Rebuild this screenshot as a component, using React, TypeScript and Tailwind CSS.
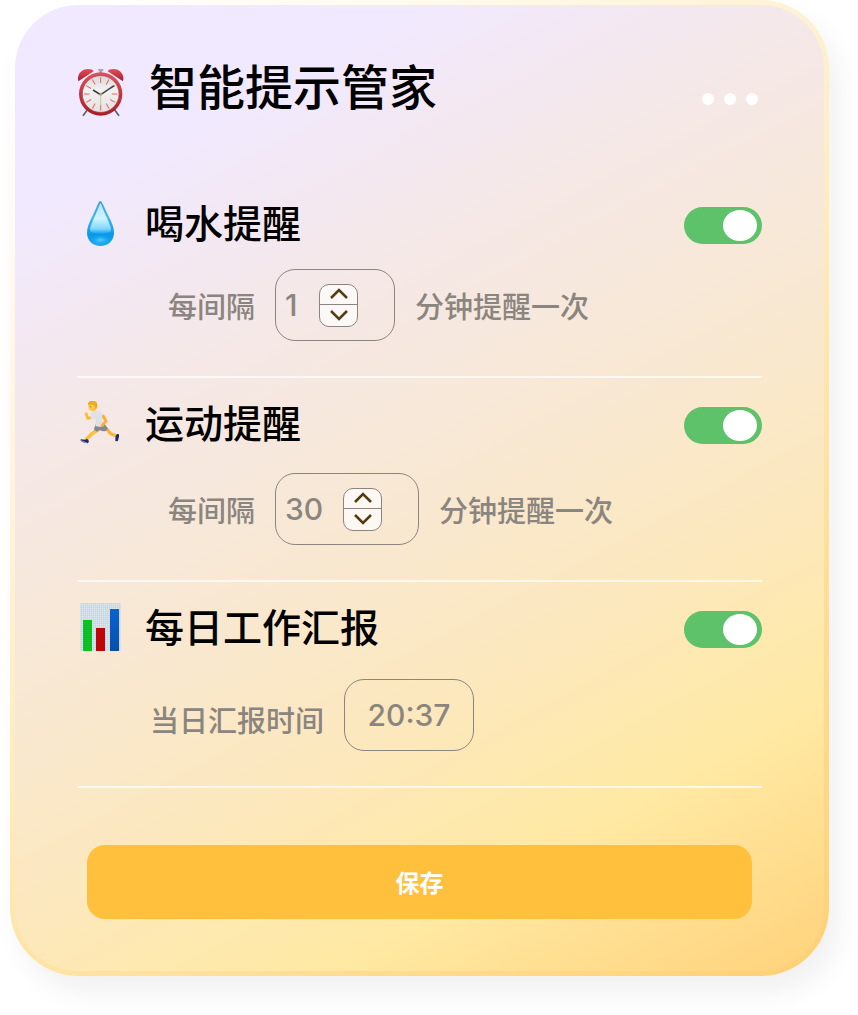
import React, { useState } from "react";

const ticks = [0, 30, 60, 90, 120, 150, 180, 210, 240, 270, 300, 330];

const ClockIcon = () => (
  <svg viewBox="27 24 144 150" className="h-[50px] w-12 shrink-0" aria-hidden="true">
    <defs>
      <linearGradient id="clock-red" x1="0" y1="0" x2="0" y2="1">
        <stop offset="0" stopColor="#e0505c" />
        <stop offset="1" stopColor="#a81c26" />
      </linearGradient>
      <linearGradient id="clock-face" x1="0" y1="0" x2="0" y2="1">
        <stop offset="0" stopColor="#d9d9d9" />
        <stop offset="0.4" stopColor="#f2f2f2" />
        <stop offset="1" stopColor="#e2e2e2" />
      </linearGradient>
    </defs>
    <path d="M58 150 46 166M140 150l12 16" stroke="#59636b" strokeWidth="5" strokeLinecap="round" />
    <path d="M98 30v14" stroke="#8a9097" strokeWidth="6" />
    <rect x="91" y="27" width="15" height="7" rx="2" fill="#a3a8ae" />
    <path d="M31 64c-5-18 7-37 29-37 9 0 15 2 17 7z" fill="url(#clock-red)" />
    <path d="M165 64c5-18-7-37-29-37-9 0-15 2-17 7z" fill="url(#clock-red)" />
    <circle cx="98" cy="102" r="65" fill="url(#clock-red)" />
    <circle cx="98" cy="102" r="55" fill="url(#clock-face)" stroke="#b3464c" strokeWidth="2" />
    {ticks.map((a) => (
      <path key={a} d="M98 52v17" stroke="#e8645f" strokeWidth="3" transform={`rotate(${a} 98 102)`} />
    ))}
    <path d="m98 104-23-14" stroke="#3d4444" strokeWidth="5" />
    <path d="m98 104 40-27" stroke="#3d4444" strokeWidth="4" />
    <path d="M98 98v44" stroke="#dfa763" strokeWidth="2" />
    <circle cx="98" cy="103" r="4" fill="#c79a5d" />
  </svg>
);

const DropIcon = () => (
  <svg viewBox="0 0 48 48" className="h-12 w-12 shrink-0" aria-hidden="true">
    <defs>
      <linearGradient id="drop-body" x1="0" y1="0" x2="0" y2="1">
        <stop offset="0" stopColor="#3d9ec4" />
        <stop offset="0.35" stopColor="#43b9ee" />
        <stop offset="0.75" stopColor="#0b98ea" />
        <stop offset="1" stopColor="#1fa9ee" />
      </linearGradient>
      <linearGradient id="drop-glow" x1="0" y1="0" x2="0" y2="1">
        <stop offset="0" stopColor="#a9e6fb" />
        <stop offset="0.5" stopColor="#d0f4ff" />
        <stop offset="0.85" stopColor="#7dd6fa" />
        <stop offset="1" stopColor="#3fb8f4" stopOpacity="0.3" />
      </linearGradient>
      <radialGradient id="drop-base">
        <stop offset="0" stopColor="#52d3f9" />
        <stop offset="1" stopColor="#19a4ee" stopOpacity="0" />
      </radialGradient>
    </defs>
    <path d="M23.300 0C21.500 0 19.500 7 15.500 15c-3 6-5.500 11-5.500 16.500C10 40 16 45 23.500 45S37 40 37 31.500C37 26 34.500 21 31.500 15 27.500 7 25 0 23.300 0z" fill="url(#drop-body)" />
    <path d="M23.500 2c-1 1-3 8-6.500 15-2 5-4 8-4 12 0 5 21 5 21 0 0-4-2-7-4-12-3.500-7-5.500-14-6.500-15z" fill="url(#drop-glow)" />
    <ellipse cx="23.500" cy="39" rx="10" ry="5" fill="url(#drop-base)" />
  </svg>
);

const RunnerIcon = () => (
  <svg viewBox="9 18 144 144" className="h-12 w-12 shrink-0" aria-hidden="true">
    <g fill="none" strokeLinecap="round" strokeLinejoin="round">
      <path d="m96 100 14 16 17 7" stroke="#f5b83c" strokeWidth="10" />
      <path d="M71 104 53 117l-15 15" stroke="#fbbf3f" strokeWidth="11" />
      <path d="m52 68-11 2-4-12" stroke="#fbb92f" strokeWidth="8" />
    </g>
    <path d="m129 117 6 1c1 6-1 13-4 21l-7-1c0-5 0-10 1-15z" fill="#1b2b66" />
    <path d="m20 133 14 1 5-3 6 7-3 7c-8-1-18-4-22-8z" fill="#1b2b66" />
    <path d="m21 137 20 8" stroke="#c9cbd3" strokeWidth="2" />
    <path d="M65 87h27l10 14c-3 5-8 8-14 8l-11-3-8 4c-5-2-8-5-9-8z" fill="#85888e" />
    <path d="M49 62c1-9 6-14 14-14h15c6 2 9 9 11 17l-5 5 2 22c-6 5-16 4-22 1l1-22-14 3z" fill="#dfe1e6" />
    <path d="m88 64 8 14-11 13" fill="none" stroke="#f7b136" strokeWidth="9" strokeLinecap="round" strokeLinejoin="round" />
    <circle cx="37" cy="57" r="5.500" fill="#ffc247" />
    <path d="M43 31c0-8 5-13 13-13s14 6 14 14-5 17-13 17c-8 0-13-5-13-10z" fill="#ffc64b" />
    <path d="M42 29c-1-7 5-12 13-12 10 0 15 5 15 14 0 5-2 9-5 11l-3-8-3-5z" fill="#e9ad20" />
    <circle cx="49" cy="35" r="1.500" fill="#6c4a18" />
  </svg>
);

const ChartIcon = () => (
  <svg viewBox="0 2 48 48" className="h-12 w-12 shrink-0 overflow-visible" aria-hidden="true">
    <defs>
      <pattern id="chart-grid" width="2" height="2" patternUnits="userSpaceOnUse">
        <rect width="2" height="2" fill="#dfe8ee" />
        <path d="M0 .5h2M.5 0v2" stroke="#c4d5e1" strokeWidth="0.700" />
      </pattern>
      <linearGradient id="chart-blue" x1="0" y1="0" x2="0" y2="1">
        <stop offset="0" stopColor="#0a63d2" />
        <stop offset="1" stopColor="#0650a8" />
      </linearGradient>
    </defs>
    <rect x="3" y="0" width="41" height="48" fill="url(#chart-grid)" />
    <rect x="6" y="17" width="9" height="31" fill="#0cbf22" />
    <rect x="19" y="25" width="9" height="23" fill="#be0508" />
    <rect x="33" y="6" width="9" height="42" fill="url(#chart-blue)" />
  </svg>
);

const Arrow: React.FC<{ d: string }> = ({ d }) => (
  <svg viewBox="0 0 20 12" className="h-3 w-5" fill="none" stroke="currentColor" strokeWidth="2.500" aria-hidden="true">
    <path d={d} />
  </svg>
);

interface ReminderProps {
  icon: React.ReactNode;
  title: string;
  className: string;
  children: React.ReactNode;
}

const Reminder: React.FC<ReminderProps> = ({ icon, title, className, children }) => {
  const [on, setOn] = useState(true);
  return (
    <section className={`border-b-2 border-white/70 ${className}`}>
      <label className="flex h-12 items-center gap-5">
        {icon}
        <span className="flex-1 pb-2 text-[39px] leading-[48px] font-medium text-black">{title}</span>
        <input
          type="checkbox"
          role="switch"
          checked={on}
          onChange={() => setOn(!on)}
          className="
            flex h-[37px] w-[78px] shrink-0 cursor-pointer appearance-none items-center rounded-full bg-gray-300 px-[5px]
            before:h-[31px] before:w-[34px] before:rounded-[50%] before:bg-white before:content-['']
            checked:justify-end checked:bg-[#5ec26a]
          "
        />
      </label>
      {children}
    </section>
  );
};

interface IntervalProps {
  id: string;
  initial: number;
  inputWidth: string;
}

const Interval: React.FC<IntervalProps> = ({ id, initial, inputWidth }) => {
  const [value, setValue] = useState(initial);
  return (
    <div className="flex items-center gap-5 pl-[91px] text-[29px] leading-[40px] font-medium text-[#8b8580]">
      <label htmlFor={id}>每间隔</label>
      <div className="flex h-[72px] items-center rounded-[20px] border border-[#8b8580] pr-9 pl-[9px]">
        <input
          id={id}
          type="number"
          value={value}
          onChange={(e) => setValue(Number(e.target.value))}
          className={`${inputWidth} bg-transparent font-[Inter] text-[30px] outline-none [appearance:textfield] [&::-webkit-inner-spin-button]:appearance-none`}
        />
        <div className="grid h-[43px] w-[39px] grid-rows-2 divide-y divide-[#8b8580] overflow-hidden rounded-[10px] border border-[#8b8580] bg-white/70 text-[#553c10]">
          <button
            type="button"
            aria-label="增加"
            onClick={() => setValue(value + 1)}
            className="flex items-center justify-center"
          >
            <Arrow d="m2 10 8-8 8 8" />
          </button>
          <button
            type="button"
            aria-label="减少"
            onClick={() => setValue(Math.max(1, value - 1))}
            className="flex items-center justify-center"
          >
            <Arrow d="m2 2 8 8 8-8" />
          </button>
        </div>
      </div>
      <span>分钟提醒一次</span>
    </div>
  );
};

const App: React.FC = () => {
  const [time, setTime] = useState("20:37");
  return (
    <div className="bg-white pr-[29px] pb-10 pl-[10px] font-['Noto_Sans_CJK_SC',sans-serif]">
      {/* a moldura é um degradê que só aparece embaixo e à direita */}
      <main className="rounded-[68px] bg-[linear-gradient(145deg,#ffffff_5%,#fff3d6_35%,#ffe3a4_65%,#ffd074_100%)] p-[5px] shadow-[10px_16px_28px_rgba(0,0,0,0.06)]">
        <div className="rounded-[63px] bg-[linear-gradient(152deg,#f1e9ff_15%,#f4e8ea_30%,#f8e8d3_50%,#fce8bd_66%,#ffe9a3_81%,#ffd27b_100%)] px-[62px] pt-[63px] pb-[52px]">
          <header className="flex items-start gap-6">
            <ClockIcon />
            <h1 className="flex-1 text-5xl leading-[32px] font-medium text-black">智能提示管家</h1>
            <button type="button" aria-label="更多" className="mt-[25px] mr-1 flex gap-[10px]">
              <span className="h-3 w-3 rounded-full bg-white" />
              <span className="h-3 w-3 rounded-full bg-white" />
              <span className="h-3 w-3 rounded-full bg-white" />
            </button>
          </header>

          <Reminder icon={<DropIcon />} title="喝水提醒" className="mt-[83px] space-y-5 pb-[35px]">
            <Interval id="water" initial={1} inputWidth="w-[34px]" />
          </Reminder>

          <Reminder icon={<RunnerIcon />} title="运动提醒" className="space-y-6 pt-[23px] pb-[35px]">
            <Interval id="sport" initial={30} inputWidth="w-[58px]" />
          </Reminder>

          <Reminder icon={<ChartIcon />} title="每日工作汇报" className="space-y-[26px] pt-[23px] pb-[35px]">
            <div className="flex items-center gap-5 pl-[73px] text-[29px] leading-[40px] font-medium text-[#8b8580]">
              <label htmlFor="report" className="pt-2">
                当日汇报时间
              </label>
              <input
                id="report"
                type="text"
                value={time}
                onChange={(e) => setTime(e.target.value)}
                className="h-[72px] w-[130px] rounded-[20px] border border-[#8b8580] bg-transparent text-center font-[Inter] text-[30px] outline-none"
              />
            </div>
          </Reminder>

          <div className="px-[10px] pt-[57px]">
            <button
              type="button"
              className="h-[74px] w-full rounded-[18px] bg-[#ffc03d] text-2xl font-bold text-white"
            >
              保存
            </button>
          </div>
        </div>
      </main>
    </div>
  );
};

export default App;
